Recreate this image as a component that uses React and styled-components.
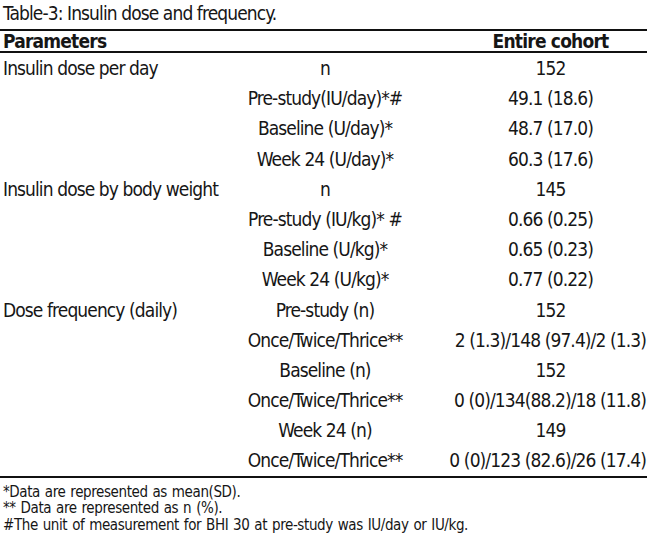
import React from "react";
import styled, { createGlobalStyle } from "styled-components";

const Global = createGlobalStyle`
  html, body { margin: 0; padding: 0; background: #fff; }
  body {
    font-family: "DejaVu Sans Condensed", "Liberation Sans Narrow", "Liberation Sans", sans-serif;
    font-stretch: condensed;
    color: #161616;
  }
`;

const Page = styled.div`
  width: 650px;
  height: 544px;
  box-sizing: border-box;
  overflow: hidden;
`;

const Title = styled.div`
  font-size: 19px;
  letter-spacing: -0.9px;
  line-height: 26px;
  padding-left: 3px;
  margin-bottom: 3px;
  white-space: nowrap;
`;

const Table = styled.div`
  width: 647px;
  border-top: 2px solid #111;
  border-bottom: 2px solid #111;
`;

const HeaderRow = styled.div`
  display: grid;
  grid-template-columns: 222px 206px 1fr;
  height: 20px;
  line-height: 20px;
  font-size: 19px;
  letter-spacing: -0.8px;
  font-weight: bold;
  border-bottom: 2px solid #111;
  white-space: nowrap;
`;

const Body = styled.div`
  padding: 0;
`;

const Row = styled.div`
  display: grid;
  grid-template-columns: 222px 206px 1fr;
  height: 30.2px;
  line-height: 30.2px;
  font-size: 19px;
  letter-spacing: -0.9px;
  white-space: nowrap;
`;

const Label = styled.div`
  padding-left: 3px;
`;

const Sub = styled.div`
  display: flex;
  justify-content: center;
`;

const Value = styled.div`
  display: flex;
  justify-content: ${(p) => (p.$wide ? "flex-end" : "center")};
  padding-left: ${(p) => (p.$wide ? "0" : "26px")};
  padding-right: ${(p) => (p.$wide ? "1px" : "0")};
`;

const Notes = styled.div`
  margin-top: 6px;
  padding-left: 3px;
  font-size: 15px;
  line-height: 16.5px;
  letter-spacing: -0.4px;
  word-spacing: 1px;
  white-space: nowrap;
`;

const rows = [
  ["Insulin dose per day", "n", "152"],
  ["", "Pre-study(IU/day)*#", "49.1 (18.6)"],
  ["", "Baseline (U/day)*", "48.7 (17.0)"],
  ["", "Week 24 (U/day)*", "60.3 (17.6)"],
  ["Insulin dose by body weight", "n", "145"],
  ["", "Pre-study (IU/kg)* #", "0.66 (0.25)"],
  ["", "Baseline (U/kg)*", "0.65 (0.23)"],
  ["", "Week 24 (U/kg)*", "0.77 (0.22)"],
  ["Dose frequency (daily)", "Pre-study (n)", "152"],
  ["", "Once/Twice/Thrice**", "2 (1.3)/148 (97.4)/2 (1.3)", true],
  ["", "Baseline (n)", "152"],
  ["", "Once/Twice/Thrice**", "0 (0)/134(88.2)/18 (11.8)", true],
  ["", "Week 24 (n)", "149"],
  ["", "Once/Twice/Thrice**", "0 (0)/123 (82.6)/26 (17.4)", true],
];

export default function App() {
  return (
    <Page>
      <Global />
      <Title>Table-3: Insulin dose and frequency.</Title>
      <Table>
        <HeaderRow>
          <Label>Parameters</Label>
          <Sub />
          <Value>Entire cohort</Value>
        </HeaderRow>
        <Body>
          {rows.map(([a, b, c, wide], i) => (
            <Row key={i}>
              <Label>{a}</Label>
              <Sub>{b}</Sub>
              <Value $wide={wide}>{c}</Value>
            </Row>
          ))}
        </Body>
      </Table>
      <Notes>
        <div>*Data are represented as mean(SD).</div>
        <div>** Data are represented as n (%).</div>
        <div>#The unit of measurement for BHI 30 at pre-study was IU/day or IU/kg.</div>
      </Notes>
    </Page>
  );
}
